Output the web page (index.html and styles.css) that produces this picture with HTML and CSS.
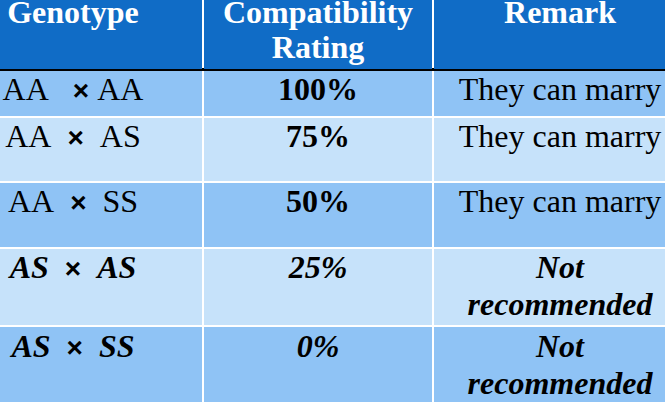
FILE: index.html
```html
<!DOCTYPE html>
<html>
<head>
<meta charset="utf-8">
<link rel="stylesheet" href="styles.css">
</head>
<body>
<div class="sheet">
  <div class="head">
    <div class="hcell"><div class="hl1">Genotype</div></div>
    <div class="hcell"><div class="hl1">Compatibility</div><div class="hl2">Rating</div></div>
    <div class="hcell"><div class="hl1">Remark</div></div>
  </div>
  <div class="rows">
    <div class="cell mid r1">AA&nbsp;&nbsp;&nbsp;<span class="x">×</span>&nbsp;AA</div>
    <div class="cell mid r1"><b>100%</b></div>
    <div class="cell mid r1">They can marry</div>

    <div class="cell light r2">AA&nbsp;&nbsp;<span class="x">×</span>&nbsp;&nbsp;AS</div>
    <div class="cell light r2"><b>75%</b></div>
    <div class="cell light r2">They can marry</div>

    <div class="cell mid r3">AA&nbsp;&nbsp;<span class="x">×</span>&nbsp;&nbsp;SS</div>
    <div class="cell mid r3"><b>50%</b></div>
    <div class="cell mid r3">They can marry</div>

    <div class="cell light r4"><b><i>AS</i></b>&nbsp;&nbsp;<span class="x">×</span>&nbsp;&nbsp;<b><i>AS</i></b></div>
    <div class="cell light r4"><b><i>25%</i></b></div>
    <div class="cell light r4"><b><i>Not<br>recommended</i></b></div>

    <div class="cell mid r5"><b><i>AS</i></b>&nbsp;&nbsp;<span class="x">×</span>&nbsp;&nbsp;<b><i>SS</i></b></div>
    <div class="cell mid r5"><b><i>0%</i></b></div>
    <div class="cell mid r5"><b><i>Not<br>recommended</i></b></div>
  </div>
</div>
</body>
</html>
```
FILE: styles.css
```css
html, body {
  margin: 0;
  padding: 0;
  background: #ffffff;
  overflow: hidden;
  width: 665px;
  height: 402px;
}
.sheet {
  margin-left: -56px;
  width: 742px;
  font-family: "Liberation Serif", "Times New Roman", serif;
  font-size: 32px;
  color: #000;
}
.head {
  display: grid;
  grid-template-columns: 258px 228px 252px;
  column-gap: 2px;
  background: #ffffff;
  border-bottom: 3px solid #000;
  height: 68px;
}
.hcell {
  background: #106cc6;
  color: #ffffff;
  font-weight: bold;
  text-align: center;
}
.hl1 {
  line-height: 25px;
}
.hl2 {
  line-height: 44px;
}
.rows {
  display: grid;
  grid-template-columns: 258px 228px 252px;
  grid-template-rows: 45px 63px 64px 76px 80px;
  column-gap: 2px;
  row-gap: 2px;
  background: #ffffff;
}
.cell {
  text-align: center;
  line-height: 36px;
  white-space: nowrap;
}
.r4 {
  line-height: 37px;
}
.r5 {
  line-height: 37px;
  padding-top: 1px;
}
.mid {
  background: #8fc3f5;
}
.light {
  background: #c6e2fa;
}
.x {
  font-family: "Liberation Sans", Arial, sans-serif;
  font-weight: bold;
  font-size: 28px;
}
```
